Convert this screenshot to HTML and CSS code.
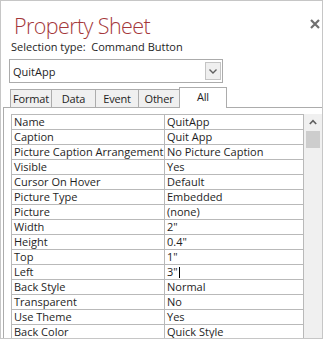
FILE: index.html
```html
<!DOCTYPE html>
<html lang="en">
<head>
    <meta charset="UTF-8">
    <meta name="viewport" content="width=device-width, initial-scale=1.0">
    <title>Property Sheet</title>
    <link rel="stylesheet" href="styles.css">
</head>
<body>

    <div class="sheet">
        <div class="head">
            <h1 class="title">Property Sheet</h1>
            <span class="close">
                <svg width="10" height="10" viewBox="0 0 10 10">
                    <path d="M1 1 L9 9 M9 1 L1 9" stroke="#707070" stroke-width="2.2" fill="none"/>
                </svg>
            </span>
        </div>
        <div class="selection">Selection type:&nbsp; Command Button</div>

        <div class="combo">
            <span class="combo-text">QuitApp</span>
            <span class="combo-btn">
                <svg width="8" height="5" viewBox="0 0 8 5">
                    <path d="M0.5 0.5 L4 4 L7.5 0.5" stroke="#606060" stroke-width="1.4" fill="none"/>
                </svg>
            </span>
        </div>

        <div class="tabs">
            <span class="tab w-format">Format</span>
            <span class="tab w-data">Data</span>
            <span class="tab w-event">Event</span>
            <span class="tab w-other">Other</span>
            <span class="tab active">All</span>
        </div>

        <div class="page">
            <table class="props">
                <tr><td class="name">Name</td><td>QuitApp</td></tr>
                <tr><td class="name">Caption</td><td>Quit App</td></tr>
                <tr><td class="name">Picture Caption Arrangement</td><td>No Picture Caption</td></tr>
                <tr><td class="name">Visible</td><td>Yes</td></tr>
                <tr><td class="name">Cursor On Hover</td><td>Default</td></tr>
                <tr><td class="name">Picture Type</td><td>Embedded</td></tr>
                <tr><td class="name">Picture</td><td>(none)</td></tr>
                <tr><td class="name">Width</td><td>2"</td></tr>
                <tr><td class="name">Height</td><td>0.4"</td></tr>
                <tr><td class="name">Top</td><td>1"</td></tr>
                <tr><td class="name">Left</td><td>3"<span class="caret"></span></td></tr>
                <tr><td class="name">Back Style</td><td>Normal</td></tr>
                <tr><td class="name">Transparent</td><td>No</td></tr>
                <tr><td class="name">Use Theme</td><td>Yes</td></tr>
                <tr><td class="name">Back Color</td><td>Quick Style</td></tr>
            </table>
            <div class="scrollbar">
                <span class="arrow">
                    <svg width="8" height="6" viewBox="0 0 8 6">
                        <path d="M0.8 5 L4 1.6 L7.2 5" stroke="#606060" stroke-width="1.6" fill="none"/>
                    </svg>
                </span>
                <span class="thumb"></span>
            </div>
        </div>
    </div>

</body>
</html>
```

FILE: styles.css
```css
body {
    margin: 0;
    padding: 0;
    background-color: white;
    font-family: "Open Sans", "Noto Sans", sans-serif;
    font-size: 11px;
    color: #1e1e1e;
}

.sheet {
    width: 323px;
    height: 339px;
    box-sizing: border-box;
    border: 1px solid #c6c6c6;
    overflow: hidden;
    display: flex;
    flex-direction: column;
}

.head {
    display: flex;
    justify-content: space-between;
    align-items: flex-start;
    height: 36px;
    flex-shrink: 0;
}

.title {
    margin: 14px 0 0 13px;
    font-size: 21.5px;
    font-weight: 300;
    line-height: 22px;
    color: #a4373a;
    letter-spacing: -0.6px;
}

.close {
    margin: 16px 2px 0 0;
}

.selection {
    margin-left: 10px;
    height: 22px;
    line-height: 19px;
    flex-shrink: 0;
}

.combo {
    margin-left: 8px;
    width: 214px;
    height: 24px;
    flex-shrink: 0;
    box-sizing: border-box;
    border: 1px solid #ababab;
    display: flex;
    justify-content: space-between;
    align-items: center;
    padding: 0 1px 0 3px;
}

.combo-btn {
    width: 16px;
    height: 18px;
    box-sizing: border-box;
    background-color: #efefef;
    border: 1px solid #c4c4c4;
    display: flex;
    align-items: center;
    justify-content: center;
}

.tabs {
    display: flex;
    align-items: flex-end;
    margin: 4px 0 0 9px;
    height: 20px;
    flex-shrink: 0;
}

.tab {
    height: 18px;
    box-sizing: border-box;
    border: 1px solid #acacac;
    border-bottom: none;
    background-color: #f0f0f0;
    margin-right: -1px;
    text-align: center;
    line-height: 17px;
    letter-spacing: -0.2px;
}

.w-format { width: 42px; }
.w-data { width: 45px; }
.w-event { width: 44px; }
.w-other { width: 42px; }

.tab.active {
    width: 48px;
    height: 21px;
    margin-bottom: -1px;
    background-color: white;
    line-height: 17px;
    position: relative;
}

.page {
    flex: 1;
    margin-left: 2px;
    border-top: 1px solid #acacac;
    border-left: 1px solid #acacac;
    padding: 6px 0 0 7px;
    display: flex;
    align-items: flex-start;
    overflow: hidden;
}

.props {
    width: 293px;
    border-collapse: collapse;
    table-layout: fixed;
}

.props td {
    border: 1px solid #b9b9b9;
    height: 14px;
    padding: 0 0 0 2px;
    line-height: 14px;
    white-space: nowrap;
    overflow: hidden;
}

.props td.name {
    width: 150px;
}

.caret {
    display: inline-block;
    width: 1px;
    height: 11px;
    background-color: black;
    vertical-align: -2px;
    margin-left: 1px;
}

.scrollbar {
    width: 18px;
    align-self: stretch;
    background-color: #f0f0f0;
    display: flex;
    flex-direction: column;
    align-items: center;
}

.arrow {
    margin-top: 5px;
    height: 6px;
    line-height: 0;
}

.thumb {
    margin-top: 6px;
    width: 14px;
    height: 17px;
    background-color: #cdcdcd;
}
```
